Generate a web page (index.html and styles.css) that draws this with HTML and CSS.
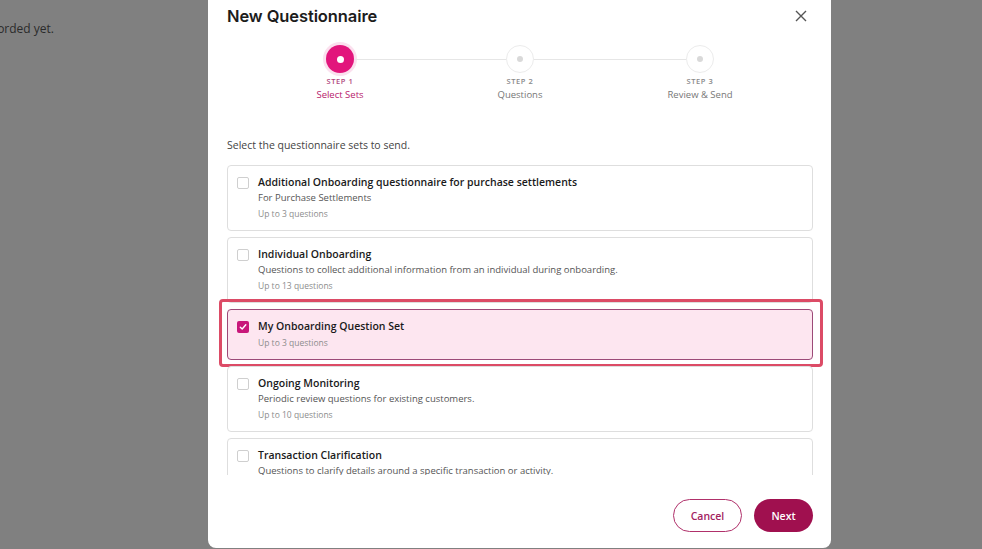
FILE: index.html
```html
<!DOCTYPE html>
<html lang="en">
<head>
    <meta charset="UTF-8">
    <meta name="viewport" content="width=device-width, initial-scale=1.0">
    <title>New Questionnaire</title>
    <link rel="stylesheet" href="styles.css">
</head>
<body>
    <div class="page">
        <div class="empty-note">
            <p>No questionnaires have been recorded yet.</p>
        </div>
    </div>

    <div class="overlay">
        <div class="modal">
            <div class="modal-header">
                <h1>New Questionnaire</h1>
                <button class="close-btn" aria-label="Close">
                    <svg width="12" height="12" viewBox="0 0 12 12">
                        <path d="M1 1 L11 11 M11 1 L1 11" stroke="#555" stroke-width="1.4" fill="none"/>
                    </svg>
                </button>
            </div>

            <div class="stepper">
                <div class="step active">
                    <div class="dot"><span></span></div>
                    <div class="step-num">STEP 1</div>
                    <div class="step-name">Select Sets</div>
                </div>
                <div class="step">
                    <div class="dot"><span></span></div>
                    <div class="step-num">STEP 2</div>
                    <div class="step-name">Questions</div>
                </div>
                <div class="step">
                    <div class="dot"><span></span></div>
                    <div class="step-num">STEP 3</div>
                    <div class="step-name">Review &amp; Send</div>
                </div>
            </div>

            <p class="intro">Select the questionnaire sets to send.</p>

            <div class="set-list">
                <label class="set-card">
                    <span class="check"></span>
                    <span class="set-info">
                        <span class="set-title">Additional Onboarding questionnaire for purchase settlements</span>
                        <span class="set-desc">For Purchase Settlements</span>
                        <span class="set-meta">Up to 3 questions</span>
                    </span>
                </label>
                <label class="set-card">
                    <span class="check"></span>
                    <span class="set-info">
                        <span class="set-title">Individual Onboarding</span>
                        <span class="set-desc">Questions to collect additional information from an individual during onboarding.</span>
                        <span class="set-meta">Up to 13 questions</span>
                    </span>
                </label>
                <label class="set-card selected">
                    <span class="check">
                        <svg width="8" height="8" viewBox="0 0 8 8">
                            <path d="M1.3 4.2 L3.2 6 L6.8 1.8" stroke="#fff" stroke-width="1.4" fill="none" stroke-linecap="round" stroke-linejoin="round"/>
                        </svg>
                    </span>
                    <span class="set-info">
                        <span class="set-title">My Onboarding Question Set</span>
                        <span class="set-meta">Up to 3 questions</span>
                    </span>
                </label>
                <label class="set-card">
                    <span class="check"></span>
                    <span class="set-info">
                        <span class="set-title">Ongoing Monitoring</span>
                        <span class="set-desc">Periodic review questions for existing customers.</span>
                        <span class="set-meta">Up to 10 questions</span>
                    </span>
                </label>
                <label class="set-card">
                    <span class="check"></span>
                    <span class="set-info">
                        <span class="set-title">Transaction Clarification</span>
                        <span class="set-desc">Questions to clarify details around a specific transaction or activity.</span>
                        <span class="set-meta">Up to 5 questions</span>
                    </span>
                </label>
            </div>

            <div class="modal-footer">
                <button class="btn btn-outline">Cancel</button>
                <button class="btn btn-primary">Next</button>
            </div>
        </div>
    </div>
</body>
</html>
```

FILE: styles.css
```css
body {
    margin: 0;
    height: 100vh;
    overflow: hidden;
    font-family: "Open Sans", Arial, sans-serif;
    background-color: #808080;
}

/* page behind the dialog, dimmed */
.page {
    padding-top: 21px;
}

.empty-note {
    width: 54px;
    display: flex;
    justify-content: flex-end;
}

.empty-note p {
    margin: 0;
    white-space: nowrap;
    font-size: 12px;
    line-height: 16px;
    color: #2b2b2b;
}

.overlay {
    position: fixed;
    inset: 0;
    padding-left: 208px;
}

.modal {
    width: 623px;
    height: 558px;
    margin-top: -10px;
    box-sizing: border-box;
    padding: 16px 18px 0 19px;
    background-color: #fff;
    border-radius: 8px;
    display: flex;
    flex-direction: column;
}

.modal-header {
    display: flex;
    justify-content: space-between;
    align-items: center;
    height: 20px;
}

.modal-header h1 {
    margin: 0;
    font-family: Inter, "Noto Sans", sans-serif;
    font-weight: 600;
    font-size: 16.5px;
    color: #1c1c1c;
    letter-spacing: -0.1px;
}

.close-btn {
    border: none;
    background: none;
    padding: 0;
    margin-right: 6px;
    display: flex;
    cursor: pointer;
}

/* stepper */
.stepper {
    width: 540px;
    margin: 19px auto 0;
    display: grid;
    grid-template-columns: repeat(3, 1fr);
}

.step {
    position: relative;
    display: flex;
    flex-direction: column;
    align-items: center;
}

.step + .step::before {
    content: "";
    position: absolute;
    top: 14px;
    left: calc(-50% + 14px);
    right: calc(50% + 14px);
    height: 1px;
    background-color: #e6e6e6;
}

.dot {
    width: 28px;
    height: 28px;
    box-sizing: border-box;
    border-radius: 50%;
    border: 1px solid #ececec;
    background-color: #fff;
    display: flex;
    align-items: center;
    justify-content: center;
}

.dot span {
    width: 6px;
    height: 6px;
    border-radius: 50%;
    background-color: #d9d9d9;
}

.step.active .dot {
    border: none;
    background-color: #e2157c;
    box-shadow: 0 0 0 3px #fbe0ee;
}

.step.active .dot span {
    width: 7px;
    height: 7px;
    background-color: #fff;
}

.step-num {
    margin-top: 3px;
    font-size: 7.5px;
    line-height: 10px;
    font-weight: 600;
    letter-spacing: 0.6px;
    color: #8a8a8a;
}

.step-name {
    margin-top: 2px;
    font-size: 9.5px;
    line-height: 13px;
    color: #777;
}

.step.active .step-num {
    color: #b0487e;
}

.step.active .step-name {
    color: #b81a6c;
}

.intro {
    margin: 37px 0 0;
    font-size: 10.5px;
    line-height: 14px;
    color: #444;
}

/* questionnaire sets; clip-path keeps the highlight frame visible at the sides */
.set-list {
    margin-top: 13px;
    height: 310px;
    clip-path: inset(0 -20px 0 -20px);
    display: flex;
    flex-direction: column;
    gap: 6px;
}

.set-card {
    position: relative;
    flex-shrink: 0;
    display: flex;
    gap: 9px;
    padding: 9px 9px 10px;
    border: 1px solid #dedede;
    border-radius: 4px;
    background-color: #fff;
    cursor: pointer;
}

.set-card.selected {
    background-color: #fde6f0;
    border-color: #9c4a78;
}

/* highlight frame around the chosen set */
.set-card.selected::after {
    content: "";
    position: absolute;
    top: -11px;
    bottom: -8px;
    left: -9px;
    right: -11px;
    border: 3px solid #dc4b66;
    border-radius: 4px;
    pointer-events: none;
}

.check {
    width: 12px;
    height: 12px;
    margin-top: 2px;
    flex-shrink: 0;
    box-sizing: border-box;
    border: 1px solid #cfcfcf;
    border-radius: 2px;
    background-color: #fff;
    display: flex;
    align-items: center;
    justify-content: center;
}

.selected .check {
    border: none;
    background-color: #c8177a;
}

.set-info {
    display: flex;
    flex-direction: column;
}

.set-title {
    font-size: 10.5px;
    line-height: 15px;
    font-weight: 600;
    color: #1a1a1a;
}

.set-desc {
    font-size: 9.5px;
    line-height: 15px;
    color: #555;
}

.set-meta {
    margin-top: 3px;
    font-size: 8.5px;
    line-height: 12px;
    color: #8d8d8d;
}

/* footer */
.modal-footer {
    margin-top: 24px;
    display: flex;
    justify-content: flex-end;
    gap: 12px;
}

.btn {
    height: 33px;
    border-radius: 17px;
    font-family: "Open Sans", Arial, sans-serif;
    font-size: 10.5px;
    font-weight: 600;
    cursor: pointer;
}

.btn-outline {
    width: 69px;
    border: 1px solid #b0306a;
    background-color: #fff;
    color: #a3225f;
}

.btn-primary {
    width: 59px;
    border: none;
    background-color: #a0104f;
    color: #fff;
}
```
